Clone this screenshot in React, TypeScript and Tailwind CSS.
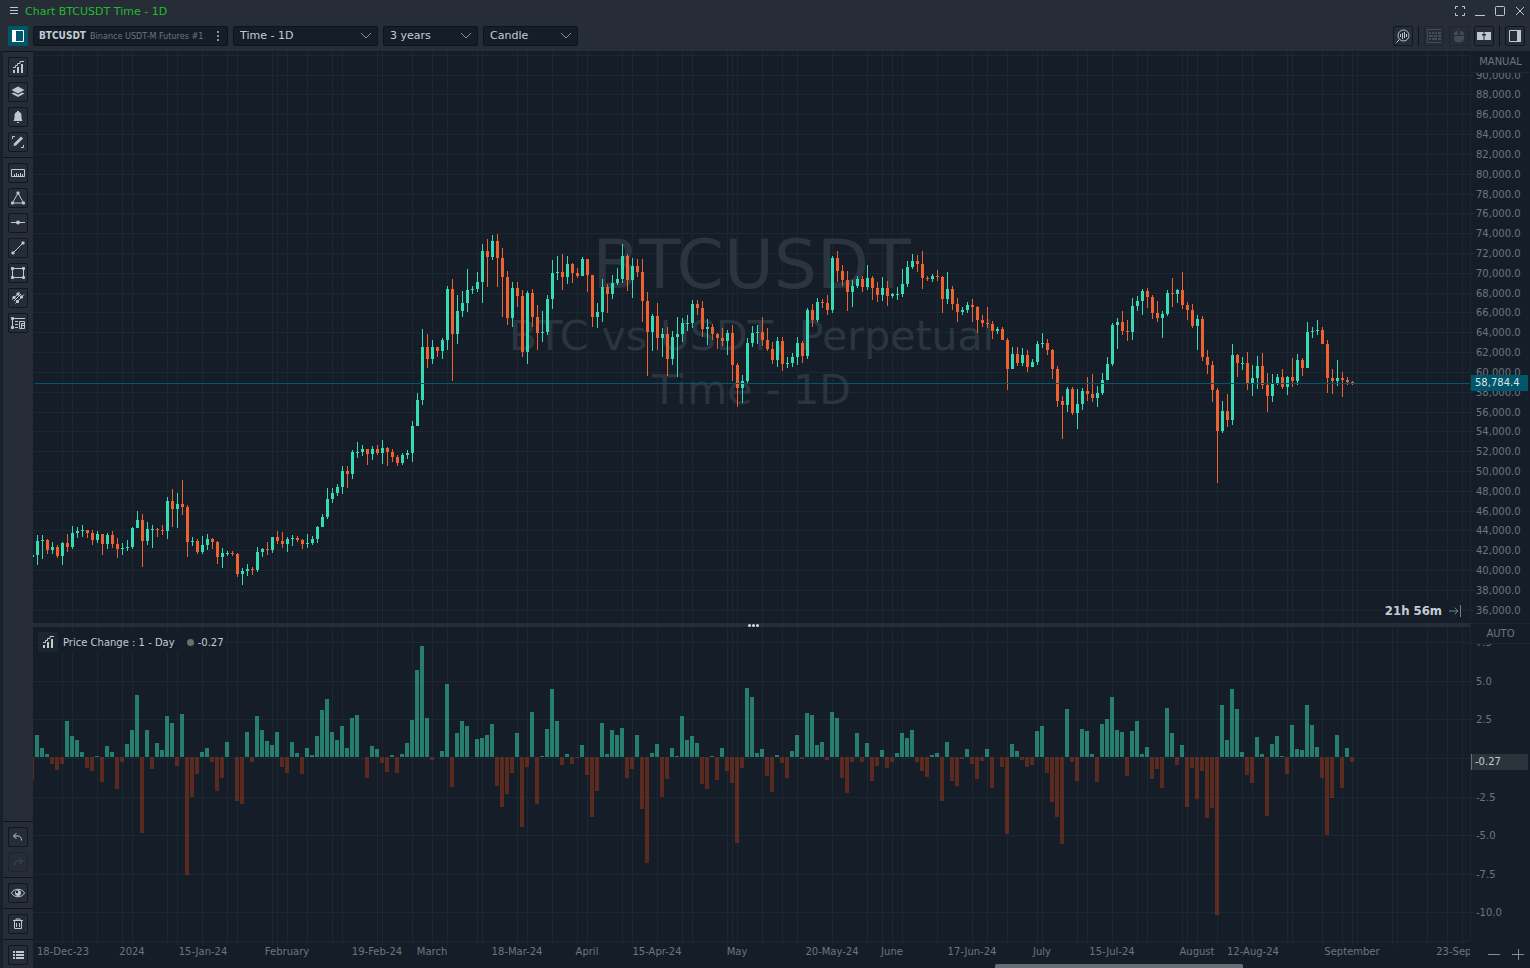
import { ReactNode } from 'react';

const PLOT_LEFT = 33;
const PRICE_TOP = 51;
const CHANGE_TOP = 627;
const FIRST_X = 37;
const STEP = 5;

const UP = '#37dbb3';
const DOWN = '#ee6130';
const GRID = '#1d2730';

// close, high, low of each day, in screen units
const candles = `
541 535 565|540 535 559|550 539 554|547 542 554|556 545 558|543 542 565|547 534 552|533 526 549|531 527 538|530 525 537
533 530 538|540 530 545|534 531 543|544 534 555|535 533 549|544 531 548|549 538 558|548 543 555|547 540 551|528 527 549
520 511 528|541 514 567|529 522 545|529 525 548|530 528 537|531 525 535|501 497 539|509 489 527|504 493 528|507 480 515
542 505 557|541 537 546|552 539 554|545 536 554|539 534 550|542 538 549|557 541 564|553 548 568|553 551 556|554 551 556
574 553 577|571 568 585|569 564 576|570 567 575|552 547 572|549 548 557|550 542 555|537 537 553|541 531 544|544 532 548
539 537 552|538 535 546|540 536 542|544 539 549|543 534 548|539 536 545|527 526 543|517 514 527|499 488 519|493 488 503
487 484 496|471 466 494|474 466 488|452 450 479|452 442 458|449 445 456|454 449 465|449 446 460|453 445 455|448 440 464
452 447 466|457 449 462|463 455 466|455 453 465|453 450 459|426 421 462|400 393 426|347 329 405|359 334 368|347 340 364
351 347 357|340 338 359|289 286 350|334 279 381|311 295 344|303 291 317|290 269 312|289 286 294|282 272 292|251 244 303
257 239 287|241 235 260|258 234 287|277 248 317|318 271 325|288 282 327|296 282 307|352 290 357|293 291 364|317 289 327
333 305 350|332 311 342|299 295 335|273 260 309|272 256 280|277 254 290|264 256 284|273 263 283|276 268 278|259 257 276
275 259 292|317 275 327|312 303 328|287 279 322|294 284 313|283 275 299|279 268 285|256 244 283|280 254 291|266 258 298
272 259 277|301 259 322|332 292 376|316 314 351|338 303 350|334 328 357|359 327 376|337 331 365|334 317 377|323 318 342
323 315 331|304 300 328|308 300 315|329 301 337|327 319 345|334 324 340|338 333 349|341 328 346|333 330 355|365 325 381
388 363 407|381 375 403|343 338 383|333 326 347|332 325 344|340 317 346|349 328 351|360 342 364|341 337 367|364 337 371
363 357 368|357 353 367|343 337 365|356 341 363|310 308 359|320 304 327|302 298 322|303 299 308|310 295 315|258 256 313
271 251 282|280 265 286|292 271 311|286 280 307|279 276 288|287 276 292|278 265 290|288 276 300|295 282 302|288 277 301
296 281 306|294 293 298|294 287 300|284 269 297|267 261 287|261 254 269|264 255 272|278 251 289|279 276 281|276 274 282
277 270 281|299 276 313|289 272 304|304 286 310|312 298 322|310 307 315|305 302 313|307 299 322|320 306 333|323 315 327
324 307 328|331 321 339|329 327 334|340 327 340|369 338 390|354 347 369|363 347 366|355 348 366|367 350 372|362 359 367
344 341 365|343 333 348|350 339 355|369 349 379|401 366 407|405 396 439|389 387 412|413 387 415|404 389 429|391 388 410
394 377 401|398 374 402|393 386 407|380 373 395|364 357 380|325 323 366|322 318 349|331 311 335|332 320 341|306 298 340
301 296 311|291 289 315|297 288 308|313 295 319|318 301 322|314 311 338|293 290 316|294 278 307|290 289 303|305 272 309
310 302 320|326 304 328|319 315 350|357 316 361|365 350 374|390 361 402|431 388 483|411 401 433|420 394 427|355 344 425
363 354 377|363 357 370|383 352 390|378 365 396|366 356 389|385 353 389|396 373 412|384 374 402|377 374 385|387 369 389
377 376 395|381 358 387|360 354 385|368 358 376|332 322 368|331 327 338|330 320 335|344 327 344|378 340 393|381 369 394
378 360 386|380 372 397|382 377 385|383 381 385`
    .trim()
    .split(/[|\n]/)
    .map((row) => row.split(' ').map(Number));

// signed bar heights of the daily change, the first one is cut by the left edge
const changes = [
    -23, 22, 9, 3, -7, -13, -7, 36, 21, 17, 5, -11, -14, 1, -25, 11, 5, -32, -5, 13, 27, 62, -76, 27, -12, 14, 7, 41, 34, -9, 43,
    -118, -40, -17, 5, 9, -5, -34, -21, 15, 0, -44, -47, 25, -5, 41, 27, 16, 12, 25, -10, -16, 15, 4, -17, 9, 2, 21, 47, 58,
    25, 17, 31, 9, 39, 42, 0, -21, 11, 8, -6, -15, 2, -16, 3, 14, 37, 87, 111, 39, -3, 0, 6, 73, -30, 24, 36, 31, 0, 18, 19,
    22, 33, -29, -50, -37, -16, 24, -70, -10, 45, -47, 1, 28, 68, 36, -8, 3, -7, -1, 12, -18, -60, -34, 34, 3, 27, 22, 29,
    -21, -12, 22, -52, -106, 4, 13, -40, -22, 9, 1, 41, 17, 21, 14, -27, -32, 1, -23, 9, -14, -26, -86, -11, 69, 60, 4, 8,
    -19, -35, 2, -6, -21, 6, 22, -2, 44, 42, 12, 15, -3, 45, 39, -21, -36, -5, 24, -5, 14, -24, -9, 7, -11, -5, 4, 24, 19,
    27, -5, -14, -20, 2, 4, -44, 15, -24, -29, -2, 8, -7, -22, -4, 8, -31, 0, -10, -77, 13, 6, -3, -10, -8, 26, 31, -16,
    -45, -60, -87, 48, -5, -24, 28, 26, 3, -25, 33, 38, 60, 27, 25, -19, 26, 36, 3, 10, -22, -12, -31, 49, 24, -8, 12, -50,
    -11, -42, -14, -61, -51, -158, 52, 17, 68, 48, 5, -18, -26, 20, 3, -59, 13, 21, 1, -17, 32, 8, 7, 52, 32, 10, -21, -78,
    -41, 22, -31, 9, -5,
];

const gridX = [
    62, 72, 97, 122, 132, 167, 177, 202, 227, 237, 272, 277, 287, 307, 332, 342, 377, 382, 412, 432, 447, 477, 482, 517, 527,
    552, 577, 587, 622, 632, 657, 682, 692, 727, 732, 737, 762, 782, 797, 832, 867, 882, 892, 902, 937, 972, 987, 1007, 1037,
    1042, 1077, 1087, 1112, 1137, 1147, 1182, 1187, 1197, 1217, 1242, 1252, 1287, 1292, 1322, 1342, 1352, 1357, 1392, 1397,
    1427, 1447, 1462,
];

const priceTicks = Array.from({ length: 29 }, (_, i) => ({
    y: Math.floor(55.3 + i * 19.82),
    label: `${92 - i * 2},000.0`,
}));

const changeTicks = [
    { y: 642, label: '7.5' },
    { y: 681, label: '5.0' },
    { y: 719, label: '2.5' },
    { y: 758, label: '' },
    { y: 797, label: '-2.5' },
    { y: 835, label: '-5.0' },
    { y: 874, label: '-7.5' },
    { y: 912, label: '-10.0' },
];

const dates: [number, string][] = [
    [63, '18-Dec-23'],
    [132, '2024'],
    [203, '15-Jan-24'],
    [287, 'February'],
    [377, '19-Feb-24'],
    [432, 'March'],
    [517, '18-Mar-24'],
    [587, 'April'],
    [657, '15-Apr-24'],
    [737, 'May'],
    [832, '20-May-24'],
    [892, 'June'],
    [972, '17-Jun-24'],
    [1042, 'July'],
    [1112, '15-Jul-24'],
    [1197, 'August'],
    [1253, '12-Aug-24'],
    [1352, 'September'],
    [1462, '23-Sep-24'],
];

function Icon({ children }: { children: ReactNode }) {
    return (
        <svg width="14" height="14" viewBox="0 0 14 14" fill="none" stroke="currentColor" strokeWidth="1" aria-hidden="true">
            {children}
        </svg>
    );
}

const dot = (x: number, y: number) => <rect x={x - 1.5} y={y - 1.5} width="3" height="3" rx="1" fill="currentColor" stroke="none" />;

const icons = {
    indicator: (
        <Icon>
            <path d="M2 10h2v3H2zM6 7h2v6H6zM10 4h2v9h-2z" fill="currentColor" stroke="none" />
            <path d="M2 7.500h2.500v-2h2v-2h2.500v-2h4" />
        </Icon>
    ),
    layers: (
        <Icon>
            <path d="M7 1.500 13.500 5 7 8.500.500 5z" fill="currentColor" stroke="none" />
            <path d="M.5 8.500 3 7.500l4 2.200L11 7.500l2.500 1L7 12z" fill="currentColor" stroke="none" />
        </Icon>
    ),
    bell: (
        <Icon>
            <path d="M6 1h2v1c2 .5 2.500 2 2.500 4S10.500 9 11.500 11h-9c1-2 1-3 1-5S4 2.500 6 2zM6 12h2v1H6z" fill="currentColor" stroke="none" />
        </Icon>
    ),
    pencil: (
        <Icon>
            <path d="m10 1.500 2 2-7 7-2.500.500.500-2.500z" fill="currentColor" stroke="none" />
            <path d="M1.500 4V1.500H4M12.500 10v2.500H10" />
        </Icon>
    ),
    ruler: (
        <Icon>
            <path d="M.5 3.500h13v7H.5zM3.500 10V8M5.500 10V7M7.500 10V8M9.500 10V7M11.500 10V8" />
        </Icon>
    ),
    triangle: (
        <Icon>
            <path d="M7 2 1.500 12h11z" />
            {dot(7, 2)}
            {dot(1.5, 12)}
            {dot(12.5, 12)}
        </Icon>
    ),
    hline: (
        <Icon>
            <path d="M0 6.500h14" />
            <circle cx="7" cy="6.500" r="2" fill="currentColor" stroke="none" />
        </Icon>
    ),
    trend: (
        <Icon>
            <path d="m2 12 10-10" />
            {dot(2, 12)}
            {dot(12, 2)}
        </Icon>
    ),
    rect: (
        <Icon>
            <path d="M1.500 2.500h11v9h-11z" />
            {dot(1.5, 2.5)}
            {dot(12.5, 2.5)}
            {dot(1.5, 11.5)}
            {dot(12.5, 11.5)}
        </Icon>
    ),
    channel: (
        <Icon>
            <path d="m1 8.500 7.500-7M4.500 12.500l8.500-9" />
            {dot(3, 6.5)}
            {dot(7, 3)}
            {dot(6.5, 10.5)}
            {dot(10.5, 6)}
            <path d="m3 10 7-7" />
        </Icon>
    ),
    profile: (
        <Icon>
            <path d="M1.500 2.500v9M1.500 2.500H14M4 5.500h3M4 8.500h3M4 11.500h3" />
            <path d="M8.500 12.500v-7h5v7zM10.500 12V7.500H13M10.500 9.500H13" />
            {dot(1.5, 2.5)}
            {dot(1.5, 11.5)}
        </Icon>
    ),
    undo: (
        <Icon>
            <path d="M5.500 3 2.500 6 5.500 9M2.500 6H7c2 0 3.500 1.500 3.500 4.500" />
        </Icon>
    ),
    redo: (
        <Icon>
            <path d="M8.500 3 11.500 6 8.500 9M11.500 6H7c-2 0-3.500 1.500-3.500 4.500" />
        </Icon>
    ),
    eye: (
        <Icon>
            <path d="M.5 7C3 2 11 2 13.500 7 11 12 3 12 .5 7z" />
            <circle cx="7" cy="7" r="3" fill="currentColor" stroke="none" />
            <circle cx="6" cy="6" r="1.200" fill="#1b232c" stroke="none" />
        </Icon>
    ),
    trash: (
        <Icon>
            <path d="M2 3.500h10M5 3.500v-1.500h4v1.500M3.500 3.500v8h7v-8M5.500 6v4M8.500 6v4" />
        </Icon>
    ),
    list: (
        <Icon>
            <path d="M2 3h2v2H2zM5 3h8v2H5zM2 6h2v2H2zM5 6h8v2H5zM2 9h2v2H2zM5 9h8v2H5z" fill="currentColor" stroke="none" />
        </Icon>
    ),
    panelLeft: (
        <Icon>
            <path d="M1.500 1.500h11v11h-11z" />
            <path d="M1 1h4v12H1z" fill="currentColor" stroke="none" />
        </Icon>
    ),
    panelRight: (
        <Icon>
            <path d="M1.500 1.500h11v11h-11z" />
            <path d="M9 1h4v12H9z" fill="currentColor" stroke="none" />
        </Icon>
    ),
    zoomChart: (
        <Icon>
            <circle cx="7.500" cy="6.500" r="5.500" />
            <path d="M3.500 10.500.5 13.500M4.500 5v3M6.500 4v6M8.500 3v6M10.500 5v3" />
        </Icon>
    ),
    keyboard: (
        <Icon>
            <path d="M0 .5h14M0 13.500h14M.5 0v14" />
            <path d="M2 3h2v2H2zM5 3h2v2H5zM8 3h2v2H8zM11 3h3v2h-3zM2 6h4v2H2zM7 6h3v2H7zM11 6h3v2h-3zM2 9h2v2H2zM5 9h5v2H5zM11 9h3v2h-3z" fill="currentColor" stroke="none" />
        </Icon>
    ),
    mouse: (
        <Icon>
            <path d="M2 6V5c0-2 1.500-3 4-3v4zM8 2c2.500 0 4 1 4 3v1H8zM2 7h10v2c0 3-2 4.500-5 4.500S2 12 2 9zM6.500 0h1v1h-1z" fill="currentColor" stroke="none" />
        </Icon>
    ),
    book: (
        <Icon>
            <path d="M0 3h6.500v2H5v1.500h1.500V11H0zM7.500 3H14v8H7.500V6.500H9V5H7.500z" fill="currentColor" stroke="none" />
        </Icon>
    ),
};

type IconName = keyof typeof icons;

const toolGroups: { name: IconName; label: string; off?: boolean }[][] = [
    [
        { name: 'indicator', label: 'Indicators' },
        { name: 'layers', label: 'Layers' },
        { name: 'bell', label: 'Alerts' },
        { name: 'pencil', label: 'Drawings' },
    ],
    [
        { name: 'ruler', label: 'Ruler' },
        { name: 'triangle', label: 'Triangle' },
        { name: 'hline', label: 'Horizontal line' },
        { name: 'trend', label: 'Trend line' },
        { name: 'rect', label: 'Rectangle' },
        { name: 'channel', label: 'Channel' },
        { name: 'profile', label: 'Volume profile' },
    ],
    [
        { name: 'undo', label: 'Undo' },
        { name: 'redo', label: 'Redo', off: true },
    ],
    [{ name: 'eye', label: 'Toggle drawings' }],
    [{ name: 'trash', label: 'Delete drawings' }],
    [{ name: 'list', label: 'Object list' }],
];

function ToolButton({ name, label, off }: { name: IconName; label: string; off?: boolean }) {
    return (
        <button
            aria-label={label}
            disabled={off}
            className={`w-5 h-5 shrink-0 flex items-center justify-center rounded-xs border ${
                off ? 'border-[#1e252d] text-[#424b55]' : 'border-[#11171e] text-[#bcc8d4]'
            }`}
        >
            {icons[name]}
        </button>
    );
}

function ToolGroup({ index }: { index: number }) {
    return (
        <div className="flex flex-col items-center gap-[5px] py-[5px] border-t border-[#0e141b]">
            {toolGroups[index].map((tool) => (
                <ToolButton key={tool.name} {...tool} />
            ))}
        </div>
    );
}

function Picker({ label, value, width }: { label: string; value: string; width: string }) {
    return (
        <div className={`relative h-5 ${width}`}>
            <select
                aria-label={label}
                className="block appearance-none w-full h-5 py-0 pl-1.5 pr-5 rounded-xs border border-[#0e141b] bg-[#151e28] text-[11px] leading-[18px] text-[#c3ccd5]"
            >
                <option>{value}</option>
            </select>
            <svg className="absolute right-1.5 top-1.5 pointer-events-none" width="12" height="7" fill="none" stroke="#848e98">
                <path d="m1 1 5 5 5-5" />
            </svg>
        </div>
    );
}

function TitleBar() {
    return (
        <div className="h-[22px] flex items-center pl-[9px] pr-1 text-[#bcc8d4]">
            <button aria-label="Menu" className="w-4">
                <svg width="10" height="9" stroke="currentColor">
                    <path d="M1 .5h8M1 3.500h8M1 6.500h8" />
                </svg>
            </button>
            <h1 className="flex-1 pt-px text-[11px] leading-4 text-[#20bc2f]">Chart BTCUSDT Time - 1D</h1>
            <div className="flex gap-2">
                <button aria-label="Full screen">
                    <svg width="12" height="12" fill="none" stroke="currentColor">
                        <path d="M1.500 4V1.500H4M8 1.500h2.500V4M1.500 8v2.500H4M8 10.500h2.500V8" />
                    </svg>
                </button>
                <button aria-label="Minimize">
                    <svg width="12" height="12" stroke="currentColor">
                        <path d="M1 10.500h10" />
                    </svg>
                </button>
                <button aria-label="Maximize">
                    <svg width="12" height="12" fill="none" stroke="currentColor">
                        <rect x="1.500" y="1.500" width="9" height="9" rx="1" />
                    </svg>
                </button>
                <button aria-label="Close">
                    <svg width="12" height="12" stroke="currentColor">
                        <path d="m2 2 8 8M10 2l-8 8" />
                    </svg>
                </button>
            </div>
        </div>
    );
}

function Toolbar() {
    return (
        <div className="h-[29px] flex items-start gap-[5px] pt-1 pl-2 pr-[5px]">
            <button aria-label="Toggle left panel" className="w-5 h-5 flex items-center justify-center rounded-xs bg-[#00566b] text-white">
                {icons.panelLeft}
            </button>
            <button className="w-[195px] h-5 flex items-center pl-[5px] pr-2 rounded-xs border border-[#0e141b] bg-[#151e28] font-['DejaVu_Sans_Condensed','DejaVu_Sans',sans-serif]">
                <span className="flex-1 flex items-baseline gap-1 leading-[18px]">
                    <span className="text-[10px] font-bold text-[#c3ccd5]">BTCUSDT</span>
                    <span className="text-[9px] text-[#6b747e]">Binance USDT-M Futures #1</span>
                </span>
                <svg width="2" height="10" fill="#8b949d">
                    <path d="M0 0h2v2H0zM0 4h2v2H0zM0 8h2v2H0z" />
                </svg>
            </button>
            <Picker label="Timeframe" value="Time - 1D" width="w-[145px]" />
            <Picker label="Period" value="3 years" width="w-[95px]" />
            <Picker label="Chart type" value="Candle" width="w-[95px]" />
            <div className="flex-1 flex justify-end gap-[5px]">
                <ToolButton name="zoomChart" label="Zoom chart" />
                <span className="w-px h-5 bg-[#0e141b]" />
                <ToolButton name="keyboard" label="Keyboard trading" off />
                <ToolButton name="mouse" label="Mouse trading" off />
                <ToolButton name="book" label="Order book" />
                <span className="w-px h-5 bg-[#0e141b]" />
                <ToolButton name="panelRight" label="Toggle right panel" />
            </div>
        </div>
    );
}

function Grid({ rows }: { rows: { y: number }[] }) {
    return (
        <g fill={GRID}>
            {gridX.map((x) => (
                <rect key={x} x={x} y="0" width="1" height="2000" />
            ))}
            {rows.map((row) => (
                <rect key={row.y} x={PLOT_LEFT + 1} y={row.y} width="4000" height="1" />
            ))}
        </g>
    );
}

function PriceChart() {
    return (
        <svg className="absolute inset-0 w-full h-full" role="img" aria-label="BTCUSDT daily candles">
            <g transform={`translate(${-PLOT_LEFT} ${-PRICE_TOP})`}>
                <Grid rows={priceTicks} />
            </g>
            <g fill="#2b353f" textAnchor="middle" fontSize="41">
                <text x="50%" y="237" fontSize="68">BTCUSDT</text>
                <text x="50%" y="299">BTC vs USDT, Perpetual</text>
                <text x="50%" y="353">Time - 1D</text>
            </g>
            <g transform={`translate(${-PLOT_LEFT} ${-PRICE_TOP})`} shapeRendering="crispEdges">
                <rect x="33" y="555" width="1" height="2" fill={UP} />
                {candles.map(([close, high, low], i) => {
                    const open = i === 0 ? 555 : candles[i - 1][0];
                    const x = FIRST_X + i * STEP;
                    return (
                        <g key={x} fill={close <= open ? UP : DOWN}>
                            <rect x={x} y={high} width="1" height={Math.max(low - high, 1)} />
                            <rect x={x - 1} y={Math.min(open, close)} width="3" height={Math.max(Math.abs(close - open), 1)} />
                        </g>
                    );
                })}
                <rect x="35" y="383" width="4000" height="1" fill="#04566a" />
            </g>
        </svg>
    );
}

function ChangeChart() {
    return (
        <svg className="absolute inset-0 w-full h-full" role="img" aria-label="Daily price change">
            <g transform={`translate(${-PLOT_LEFT} ${-CHANGE_TOP})`} shapeRendering="crispEdges">
                <Grid rows={changeTicks} />
                {changes.map((h, i) => (
                    <rect
                        key={i}
                        x={FIRST_X - 2 + (i - 1) * STEP}
                        y={h > 0 ? 757 - h : 757}
                        width="4"
                        height={Math.abs(h)}
                        fill={h > 0 ? '#35d6ae' : '#d84010'}
                        fillOpacity={h > 0 ? 0.52 : 0.36}
                    />
                ))}
            </g>
        </svg>
    );
}

function AxisLabels({ rows, top }: { rows: { y: number; label: string }[]; top: number }) {
    return (
        <svg className="absolute inset-0 w-full h-full" fontSize="10" fill="#6c757e">
            {rows.map((row) => (
                <g key={row.y}>
                    <rect x="0" y={row.y - top} width="3" height="1" fill={GRID} />
                    <text x="5" y={row.y - top + 4}>{row.label}</text>
                </g>
            ))}
        </svg>
    );
}

export default function App() {
    return (
        <div className="h-screen flex flex-col overflow-hidden bg-[#151e28] font-['DejaVu_Sans',sans-serif]">
            <header className="h-[51px] shrink-0 bg-[#262d36]">
                <TitleBar />
                <Toolbar />
            </header>

            <div className="flex-1 min-h-0 flex">
                <aside className="w-[33px] shrink-0 flex flex-col justify-between bg-[#262d36] border-l-[3px] border-[#18212b]">
                    <div>
                        <ToolGroup index={0} />
                        <ToolGroup index={1} />
                    </div>
                    <div className="-mb-0.5">
                        <ToolGroup index={2} />
                        <ToolGroup index={3} />
                        <ToolGroup index={4} />
                        <ToolGroup index={5} />
                    </div>
                </aside>

                <main className="flex-1 min-w-0 grid grid-cols-[minmax(0,1fr)_60px] grid-rows-[minmax(0,572fr)_4px_minmax(0,314fr)_27px]">
                    {/* Price pane */}
                    <section className="relative overflow-hidden">
                        <PriceChart />
                        <div className="absolute right-[7px] bottom-0.5 h-5 px-0.5 flex items-center gap-[7px] bg-[#151e28] text-[#c3ccd5]">
                            <span className="text-[13px] font-bold font-['DejaVu_Sans_Condensed','DejaVu_Sans',sans-serif]">21h 56m</span>
                            <svg width="12" height="12" fill="none" stroke="#77818b">
                                <path d="M0 6h9M5.500 2.500 9 6 5.500 9.500M11.500 0v12" />
                            </svg>
                        </div>
                    </section>
                    <div className="flex flex-col border-l border-[#1d2730]">
                        <button className="h-[22px] shrink-0 border-b border-[#1d2730] text-[10px] text-[#6c757e]">MANUAL</button>
                        <div className="relative flex-1 overflow-hidden">
                            <AxisLabels rows={priceTicks.slice(1)} top={73} />
                            <span className="absolute -left-px right-0.5 top-[302px] h-4 pl-[5px] bg-[#00566b] text-[10px] leading-4 text-[#dbe3ea]">
                                58,784.4
                            </span>
                        </div>
                    </div>

                    <div className="flex items-center justify-center gap-px pl-[3px] bg-[#262d36]">
                        <span className="w-[3px] h-[3px] rounded-full bg-[#d5dce3]" />
                        <span className="w-[3px] h-[3px] rounded-full bg-[#d5dce3]" />
                        <span className="w-[3px] h-[3px] rounded-full bg-[#d5dce3]" />
                    </div>
                    <div className="row-span-2 flex flex-col border-l border-t border-[#1d2730]">
                        <button className="h-5 shrink-0 border-b border-[#1d2730] text-[10px] text-[#6c757e]">AUTO</button>
                        <div className="relative flex-1 overflow-hidden">
                            <AxisLabels rows={changeTicks} top={644} />
                            <span className="absolute -left-px right-0.5 top-[110px] h-4 pl-[3px] border-l-2 border-[#6b7075] bg-[#2b343b] text-[10px] leading-4 text-[#c3ccd5]">
                                -0.27
                            </span>
                        </div>
                    </div>

                    {/* Price change pane */}
                    <section className="relative overflow-hidden">
                        <ChangeChart />
                        <div className="absolute left-[5px] top-[5px] h-5 flex items-center bg-[#151e28] text-[10px] text-[#c3ccd5]">
                            <span className="w-5 h-5 flex items-center justify-center bg-[#1c262e]">{icons.indicator}</span>
                            <span className="ml-[5px]">Price Change : 1 - Day</span>
                            <span className="ml-3 mr-1 w-[7px] h-[7px] rounded-full bg-[#6e6e6e]" />
                            <span>-0.27</span>
                        </div>
                    </section>

                    {/* Time axis */}
                    <div className="relative overflow-hidden border-t border-[#1d2730]">
                        <svg className="absolute inset-0 w-full h-full" fontSize="10" fill="#6c757e" textAnchor="middle">
                            {gridX.map((x) => (
                                <rect key={x} x={x - PLOT_LEFT} y="0" width="1" height="3" fill={GRID} />
                            ))}
                            {dates.map(([x, label]) => (
                                <text key={x} x={x - PLOT_LEFT} y="13">{label}</text>
                            ))}
                        </svg>
                        <div className="absolute bottom-0 right-[227px] w-[248px] h-1 rounded-t-xs bg-[#656d75]" />
                    </div>
                    <div className="flex items-center justify-center gap-3 pl-3 pb-0.5 text-[#848e98]">
                        <button aria-label="Zoom out">
                            <svg width="12" height="12" stroke="currentColor">
                                <path d="M0 6.500h12" />
                            </svg>
                        </button>
                        <button aria-label="Zoom in">
                            <svg width="12" height="12" stroke="currentColor">
                                <path d="M0 6.500h12M6.500 1v11" />
                            </svg>
                        </button>
                    </div>
                </main>
            </div>
        </div>
    );
}
